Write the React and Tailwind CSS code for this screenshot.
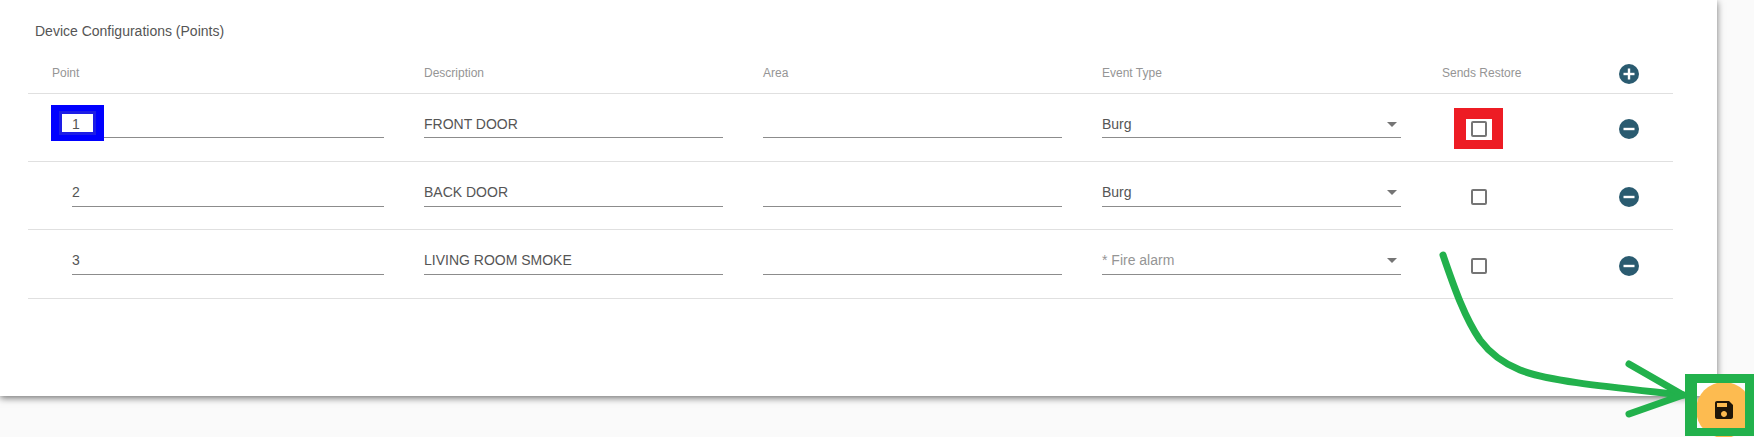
const rows = [
  { point: "1", description: "FRONT DOOR", eventType: "Burg" },
  { point: "2", description: "BACK DOOR", eventType: "Burg" },
  { point: "3", description: "LIVING ROOM SMOKE", eventType: "* Fire alarm", placeholder: true },
];

const gridCols = "grid grid-cols-[396px_339px_339px_339px_178px_54px]";

const Field = ({ value, className = "" }) => (
  <div className={`h-[27px] border-b border-[#8c8c8c] flex items-center text-[14px] text-[#555] ${className}`}>
    {value}
  </div>
);

const RoundIcon = ({ minus }) => (
  <svg width="20" height="20" viewBox="0 0 20 20">
    <circle cx="10" cy="10" r="10" fill="#2a5b70" />
    <rect x="4.5" y="8.8" width="11" height="2.4" fill="#fff" />
    {!minus && <rect x="8.8" y="4.5" width="2.4" height="11" fill="#fff" />}
  </svg>
);

const EventSelect = ({ value, placeholder }) => (
  <div className={`w-[299px] h-[27px] border-b border-[#8c8c8c] flex items-center justify-between pr-[4px] text-[14px] ${placeholder ? "text-[#959595]" : "text-[#555]"}`}>
    <span>{value}</span>
    <svg width="10" height="5" viewBox="0 0 10 5">
      <path d="M0 0h10L5 5z" fill="#757575" />
    </svg>
  </div>
);

const Row = ({ row }) => (
  <div className={`${gridCols} h-[68.2px] border-b border-[#e0e0e0] items-start pt-[17.4px]`}>
    <div className="pl-[44px]">
      <Field value={row.point} className="w-[312px]" />
    </div>
    <Field value={row.description} className="w-[299px]" />
    <Field value="" className="w-[299px]" />
    <EventSelect value={row.eventType} placeholder={row.placeholder} />
    <div className="pl-[30px] pt-[9.8px]">
      <div className="w-[16px] h-[16px] border-2 border-[#757575] rounded-[2px]" />
    </div>
    <div className="pt-[7.8px]">
      <RoundIcon minus />
    </div>
  </div>
);

const Annotations = () => (
  <>
    <div className="absolute left-[51px] top-[105px] w-[53px] h-[36px] border-x-[8px] border-y-[6px] border-[#0000ff]">
      <div className="w-full h-full border-[3px] border-[#1d1de6]" />
    </div>
    <div className="absolute left-[1454px] top-[108px] w-[49px] h-[41px] border-l-[12px] border-r-[11px] border-t-[11px] border-b-[9px] border-[#ed1c24]" />
    <div className="absolute left-[1685px] top-[374px] w-[69px] h-[62px] border-l-[12px] border-r-[9px] border-t-[9px] border-b-[8px] border-[#22b14c]" />
    <svg className="absolute left-0 top-0 pointer-events-none" width="1754" height="437" viewBox="0 0 1754 437" fill="none">
      <path
        d="M1443 255 C1455 290 1465 318 1480 340 C1492 356 1505 364 1520 370 C1550 382 1620 388 1683 395"
        stroke="#22b14c"
        strokeWidth="7"
        strokeLinecap="round"
      />
      <path
        d="M1629 364 L1683 395 L1629 414"
        stroke="#22b14c"
        strokeWidth="7"
        strokeLinecap="round"
        strokeLinejoin="round"
      />
    </svg>
  </>
);

const App = () => {
  return (
    <div className="relative w-[1754px] h-[437px] overflow-hidden bg-[#fafafa] font-['Liberation_Sans',sans-serif]">
      <div className="w-[1717px] h-[396px] bg-white shadow-[0_2px_7px_rgba(0,0,0,0.55)] pl-[28px]">
        <div className="h-[62px] pl-[7px] pt-[22px] text-[14px] leading-[18px] text-[#555]">
          Device Configurations (Points)
        </div>
        <div className="w-[1645px]">
          <div className={`${gridCols} h-[32px] border-b border-[#e0e0e0] text-[12px] text-[#959595] items-start`}>
            <div className="pl-[24px] pt-[2px]">Point</div>
            <div className="pt-[2px]">Description</div>
            <div className="pt-[2px]">Area</div>
            <div className="pt-[2px]">Event Type</div>
            <div className="pl-px pt-[2px]">Sends Restore</div>
            <div className="pt-[2px]">
              <RoundIcon />
            </div>
          </div>
          {rows.map((row) => (
            <Row key={row.point} row={row} />
          ))}
        </div>
      </div>
      <button className="absolute left-[1696px] top-[382px] w-[56px] h-[56px] rounded-full bg-[#fdbb50] flex items-center justify-center">
        <svg width="24" height="24" viewBox="0 0 24 24" fill="#1f1608">
          <path d="M17 3H5c-1.11 0-2 .9-2 2v14c0 1.1.89 2 2 2h14c1.1 0 2-.9 2-2V7l-4-4zm-5 16c-1.66 0-3-1.34-3-3s1.34-3 3-3 3 1.34 3 3-1.34 3-3 3zm3-10H5V5h10v4z" />
        </svg>
      </button>
      <Annotations />
    </div>
  );
};

export default App;
